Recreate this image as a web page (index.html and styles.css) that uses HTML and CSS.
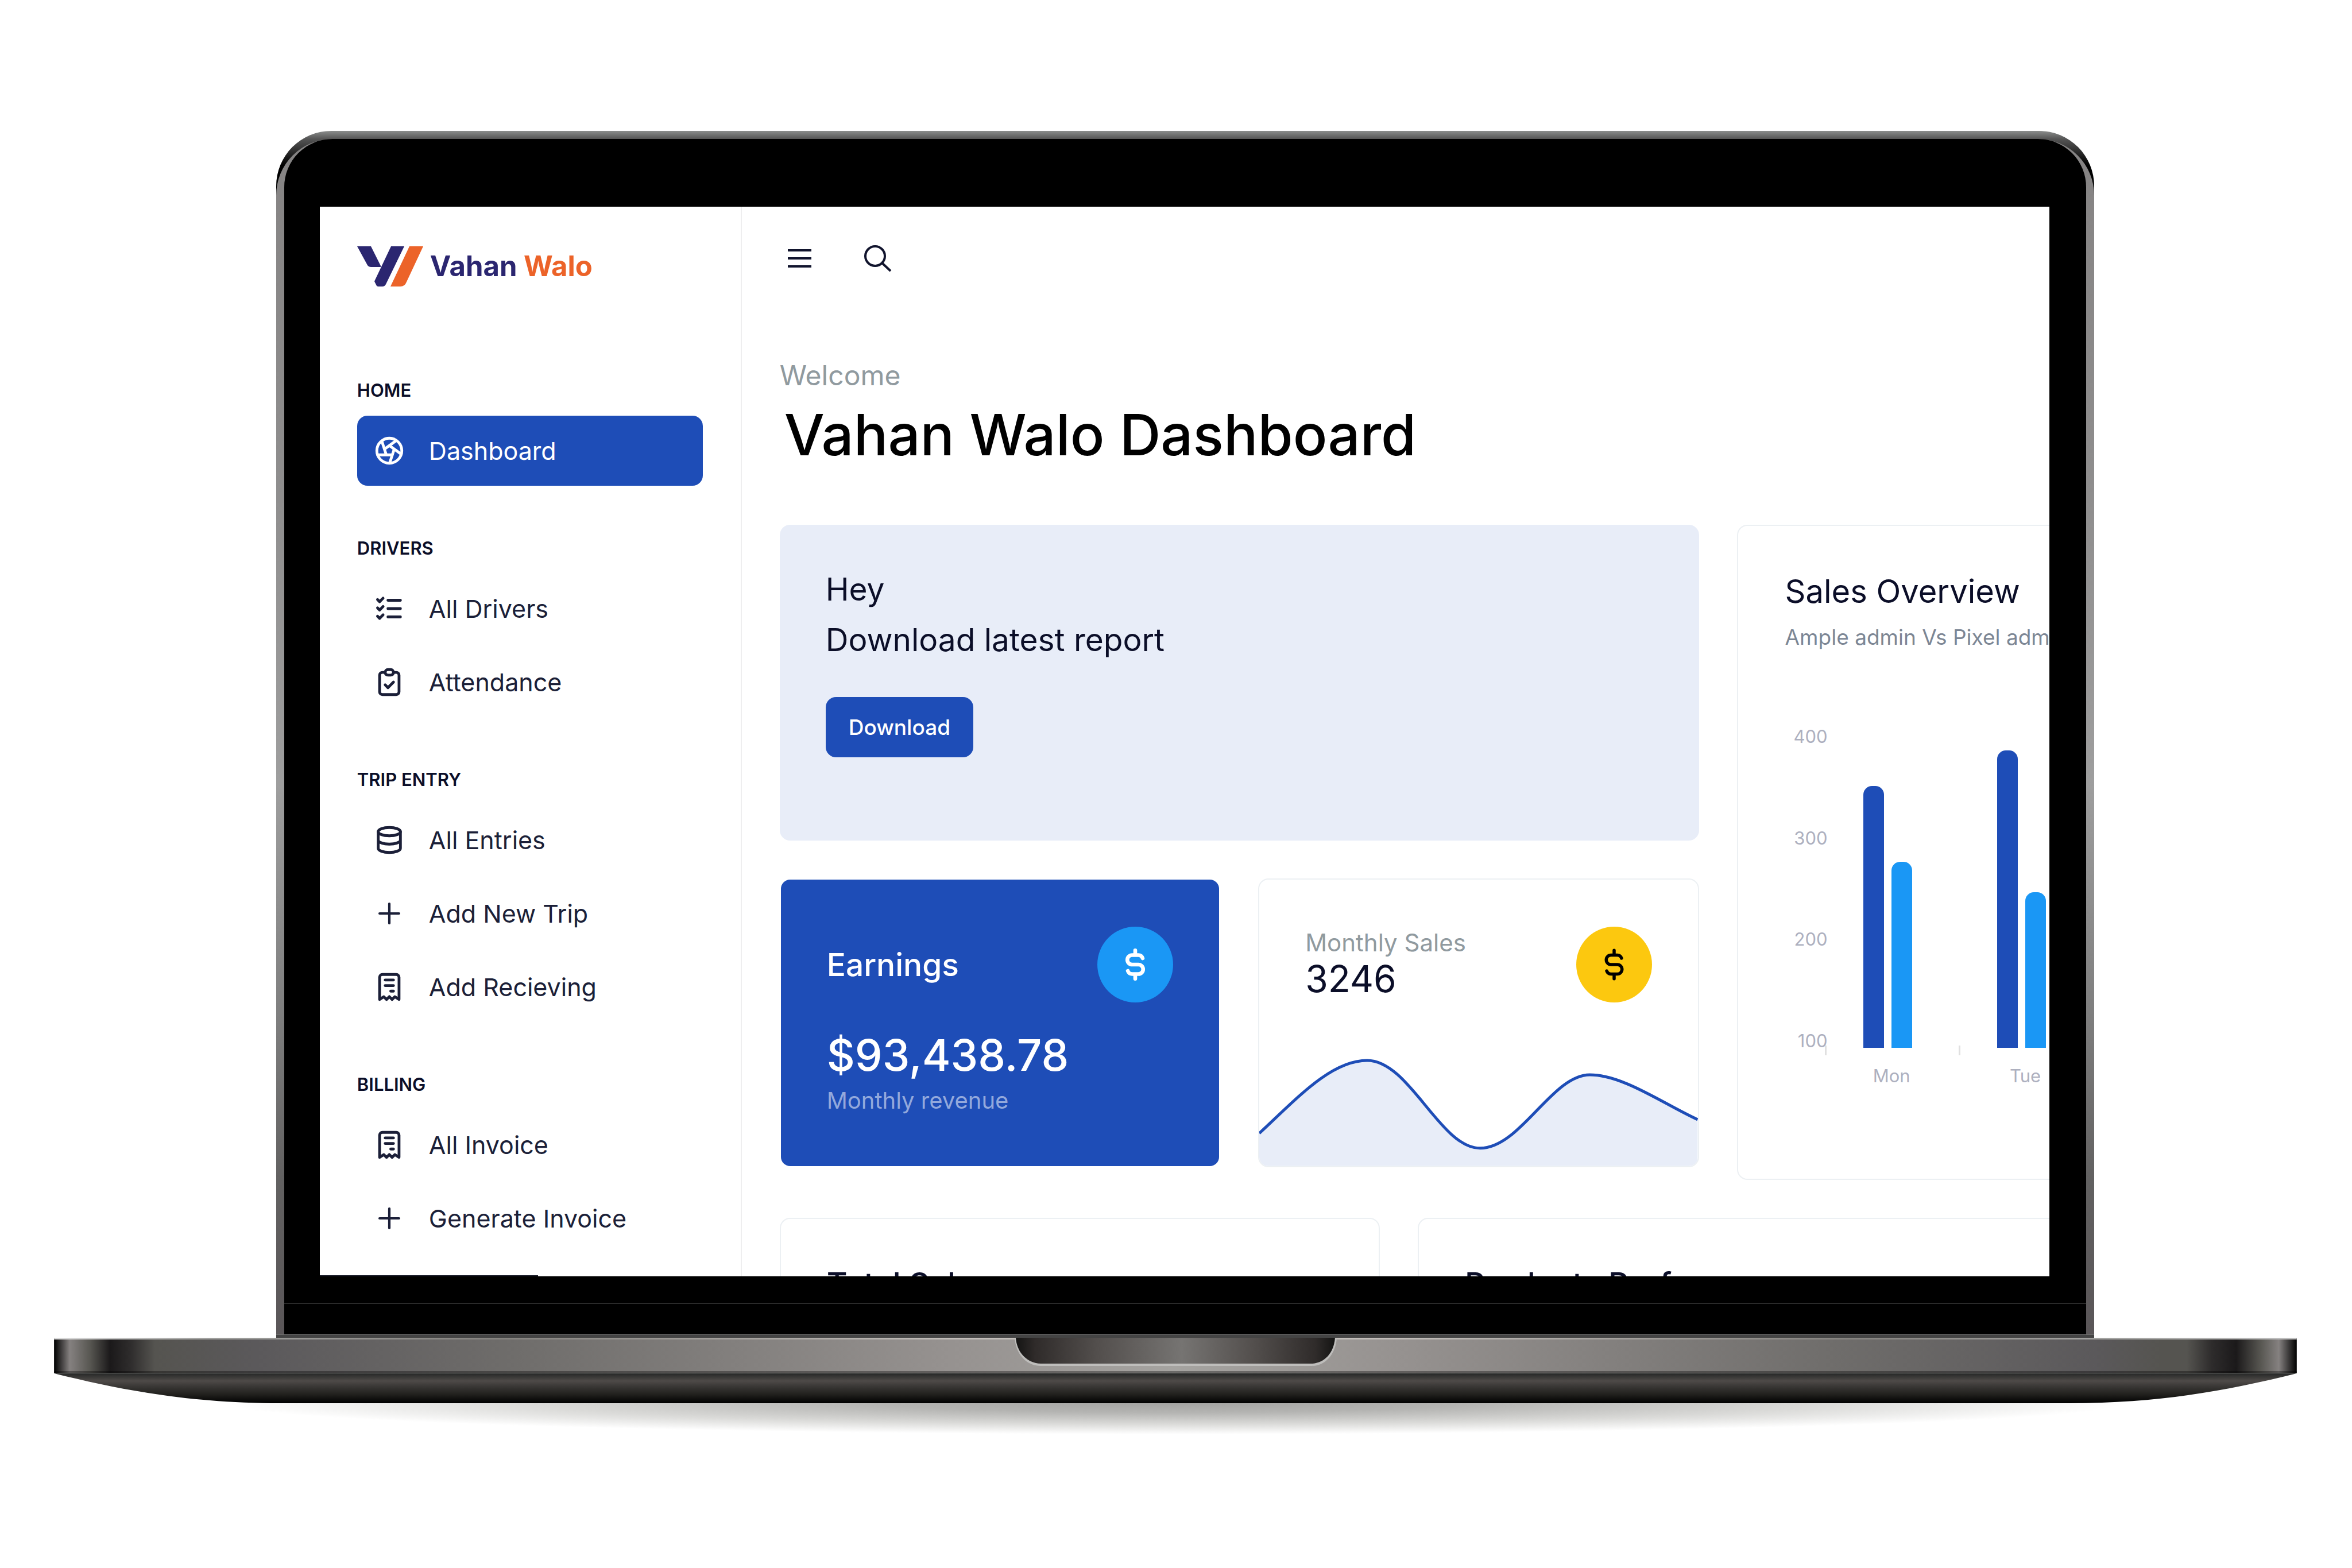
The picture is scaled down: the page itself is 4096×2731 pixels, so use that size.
FILE: index.html
```html
<!DOCTYPE html>
<html lang="en">
<head>
<meta charset="utf-8">
<meta name="viewport" content="width=device-width, initial-scale=1">
<title>Vahan Walo Dashboard</title>
<link rel="stylesheet" href="styles.css">
</head>
<body>
<svg class="sprite" aria-hidden="true">
  <symbol id="i-aperture" viewBox="0 0 24 24"><circle cx="12" cy="12" r="9"/><path d="M3.6 15h10.55M6.551 4.938l3.26 10.034M17.032 4.636l-8.535 6.201M20.559 14.51l-8.535-6.201M12.257 20.916l3.261-10.034"/></symbol>
  <symbol id="i-list" viewBox="0 0 24 24"><path d="M3.5 5.5l1.5 1.5l2.5-2.5M3.5 11.5l1.5 1.5l2.5-2.5M3.5 17.5l1.5 1.5l2.5-2.5M11 6h9M11 12h9M11 18h9"/></symbol>
  <symbol id="i-clipboard" viewBox="0 0 24 24"><path d="M9 5h-2a2 2 0 0 0-2 2v12a2 2 0 0 0 2 2h10a2 2 0 0 0 2-2v-12a2 2 0 0 0-2-2h-2"/><rect x="9" y="3" width="6" height="4" rx="2"/><path d="M9 14l2 2l4-4"/></symbol>
  <symbol id="i-database" viewBox="0 0 24 24"><ellipse cx="12" cy="6" rx="8" ry="3"/><path d="M4 6v6a8 3 0 0 0 16 0v-6M4 12v6a8 3 0 0 0 16 0v-6"/></symbol>
  <symbol id="i-plus" viewBox="0 0 24 24"><path stroke-width="1.75" d="M12 5v14M5 12h14"/></symbol>
  <symbol id="i-receipt" viewBox="0 0 24 24"><path d="M5 21v-16a2 2 0 0 1 2-2h10a2 2 0 0 1 2 2v16l-3-2l-2 2l-2-2l-2 2l-2-2l-3 2M9 7h6M9 11h6M13 15h2"/></symbol>
  <symbol id="i-dollar" viewBox="0 0 24 24"><path d="M16.7 8a3 3 0 0 0-2.7-2h-4a3 3 0 0 0 0 6h4a3 3 0 0 1 0 6h-4a3 3 0 0 1-2.7-2M12 3v3M12 18v3"/></symbol>
</svg>

<div class="laptop">
  <div class="lid">
    <div class="rim">
      <div class="bezel">
        <div class="screen">
          <aside class="sidebar">
            <a class="brand" href="#">
              <svg class="brand-mark" viewBox="0 0 115 70" aria-hidden="true">
                <path fill="#2b2670" d="M0 0H24L41 34V36H24Q20 36 18 33Z"/>
                <path fill="#2b2670" d="M59 0H82L50 66Q48 70 44 70H37Q34 70 33 67L30 61Z"/>
                <path fill="#ec6329" d="M91 0H115L86 62Q83 70 75 70H58Z"/>
              </svg>
              <span class="brand-name">Vahan <span class="brand-accent">Walo</span></span>
            </a>
            <nav class="menu">
              <section class="menu-group">
                <h2>HOME</h2>
                <a class="item active" href="#"><svg class="icon"><use href="#i-aperture"/></svg>Dashboard</a>
              </section>
              <section class="menu-group">
                <h2>DRIVERS</h2>
                <a class="item" href="#"><svg class="icon"><use href="#i-list"/></svg>All Drivers</a>
                <a class="item" href="#"><svg class="icon"><use href="#i-clipboard"/></svg>Attendance</a>
              </section>
              <section class="menu-group">
                <h2>TRIP ENTRY</h2>
                <a class="item" href="#"><svg class="icon"><use href="#i-database"/></svg>All Entries</a>
                <a class="item" href="#"><svg class="icon"><use href="#i-plus"/></svg>Add New Trip</a>
                <a class="item" href="#"><svg class="icon"><use href="#i-receipt"/></svg>Add Recieving</a>
              </section>
              <section class="menu-group">
                <h2>BILLING</h2>
                <a class="item" href="#"><svg class="icon"><use href="#i-receipt"/></svg>All Invoice</a>
                <a class="item" href="#"><svg class="icon"><use href="#i-plus"/></svg>Generate Invoice</a>
              </section>
            </nav>
          </aside>

          <main class="main">
            <div class="topbar">
              <button class="tool" type="button" aria-label="Toggle menu"><svg viewBox="0 0 60 60"><path d="M10 16H51M10 30H51M10 44H51"/></svg></button>
              <button class="tool" type="button" aria-label="Search"><svg viewBox="0 0 60 60"><circle cx="26" cy="26" r="17"/><path d="M38 38L53 52"/></svg></button>
            </div>
            <p class="welcome">Welcome</p>
            <h1>Vahan Walo Dashboard</h1>

            <div class="cards">
              <div class="left">
                <section class="hero">
                  <p>Hey<br>Download latest report</p>
                  <button class="download" type="button">Download</button>
                </section>
                <div class="pair">
                  <section class="card earnings">
                    <div class="card-row">
                      <h3>Earnings</h3>
                      <span class="coin coin-blue"><svg class="dollar"><use href="#i-dollar"/></svg></span>
                    </div>
                    <p class="amount">$93,438.78</p>
                    <p class="caption">Monthly revenue</p>
                  </section>
                  <section class="card monthly">
                    <div class="card-row">
                      <div>
                        <p class="label">Monthly Sales</p>
                        <p class="count">3246</p>
                      </div>
                      <span class="coin coin-yellow"><svg class="dollar"><use href="#i-dollar"/></svg></span>
                    </div>
                    <svg class="spark" viewBox="0 0 764 200" aria-hidden="true">
                      <path fill="#e8edf8" d="M0 143C66 82 125 16 188 16C262 16 315 169 385 169C455 169 510 41 576 41C634 41 705 92 764 119V200H0Z"/>
                      <path fill="none" stroke="#1e4db7" stroke-width="5" d="M0 143C66 82 125 16 188 16C262 16 315 169 385 169C455 169 510 41 576 41C634 41 705 92 764 119"/>
                    </svg>
                  </section>
                </div>
              </div>

              <section class="card sales">
                <h3>Sales Overview</h3>
                <p class="sub">Ample admin Vs Pixel admin</p>
                <div class="chart">
                  <div class="y-axis"><span>400</span><span>300</span><span>200</span><span>100</span></div>
                  <div class="plot">
                    <div class="day"><div class="bars"><i class="bar" style="height:456px"></i><i class="bar light" style="height:324px"></i></div><span>Mon</span></div>
                    <div class="day"><div class="bars"><i class="bar" style="height:518px"></i><i class="bar light" style="height:271px"></i></div><span>Tue</span></div>
                  </div>
                </div>
              </section>

              <section class="card total"><h3>Total Sales</h3></section>
              <section class="card products"><h3>Products Performance</h3></section>
            </div>
          </main>
          <div class="status"></div>
        </div>
        <div class="chin"></div>
      </div>
    </div>
    <div class="hinge"></div>
  </div>

  <svg class="base" viewBox="0 0 3906 180" aria-hidden="true">
    <defs>
      <linearGradient id="deck">
        <stop offset="0" stop-color="#000"/><stop offset=".007" stop-color="#858180"/><stop offset=".016" stop-color="#585752"/><stop offset=".025" stop-color="#1b191a"/><stop offset=".034" stop-color="#2e2c2c"/><stop offset=".045" stop-color="#555450"/><stop offset=".09" stop-color="#5b595b"/><stop offset=".206" stop-color="#6f6d6b"/><stop offset=".4" stop-color="#969290"/><stop offset=".5" stop-color="#a5a3a0"/>
        <stop offset=".6" stop-color="#969290"/><stop offset=".794" stop-color="#6f6d6b"/><stop offset=".91" stop-color="#5b595b"/><stop offset=".94" stop-color="#555450"/><stop offset=".951" stop-color="#555450"/><stop offset=".962" stop-color="#2e2c2c"/><stop offset=".973" stop-color="#1b191a"/><stop offset=".984" stop-color="#585752"/><stop offset=".992" stop-color="#858180"/><stop offset="1" stop-color="#000"/>
      </linearGradient>
      <linearGradient id="edge">
        <stop offset="0" stop-color="#dcdcdc"/><stop offset=".07" stop-color="#a0a09e"/><stop offset=".2" stop-color="#85837f"/><stop offset=".4" stop-color="#c2beba"/><stop offset=".6" stop-color="#c2beba"/><stop offset=".8" stop-color="#85837f"/><stop offset=".93" stop-color="#a8a8a6"/><stop offset="1" stop-color="#c0c0c0"/>
      </linearGradient>
      <linearGradient id="belly" x2="0" y2="1">
        <stop offset="0" stop-color="#262827"/><stop offset=".25" stop-color="#4e4a48"/><stop offset=".45" stop-color="#383634"/><stop offset=".7" stop-color="#22211e"/><stop offset="1" stop-color="#000"/>
      </linearGradient>
      <linearGradient id="notch">
        <stop offset="0" stop-color="#141413"/><stop offset=".06" stop-color="#2f2b2a"/><stop offset=".25" stop-color="#524e4c"/><stop offset=".52" stop-color="#767472"/><stop offset=".75" stop-color="#524e4c"/><stop offset=".94" stop-color="#2f2b2a"/><stop offset="1" stop-color="#141413"/>
      </linearGradient>
      <radialGradient id="shade">
        <stop offset="0" stop-color="#a4a4a2"/><stop offset=".3" stop-color="#b4b4b2"/><stop offset=".67" stop-color="#dadad8"/><stop offset="1" stop-color="#fff"/>
      </radialGradient>
    </defs>
    <ellipse cx="1953" cy="114" rx="1651" ry="54" fill="url(#shade)"/>
    <path fill="url(#belly)" d="M0 62C120 92 240 114 395 114H3511C3666 114 3786 92 3906 62Z"/>
    <rect width="3906" height="62" fill="url(#deck)"/>
    <rect width="3906" height="3" fill="url(#edge)"/>
    <rect y="58" width="3906" height="4" fill="#000" opacity=".35"/>
    <rect y="61" width="3906" height="1" fill="#8a8a88"/>
    <path fill="#bebdbb" d="M1673 0C1675 30 1695 49 1717 49H2191C2213 49 2232 30 2234 0Z"/>
    <path fill="url(#notch)" d="M1675 0C1677 28 1697 45 1719 45H2189C2211 45 2229 28 2231 0Z"/>
  </svg>
</div>
</body>
</html>
```
FILE: styles.css
```css
* { box-sizing: border-box; }
body, h1, h2, h3, p { margin: 0; }
body {
  background: #fff;
  color: #0b0e28;
  font-family: Inter, "Liberation Sans", sans-serif;
  overflow: hidden;
}
h1, h2, h3 { font-weight: 500; }
a { color: inherit; text-decoration: none; }
button { font: inherit; border: 0; cursor: pointer; }
.sprite { display: none; }

/* Laptop shell */
.laptop { padding-top: 228px; }
.lid {
  width: 77.29%;
  margin-left: 11.74%;
  padding-top: 14px;
  border-radius: 96px 96px 0 0;
  background: linear-gradient(#8b8d8c, #555 14px, #000 60px);
}
.rim {
  padding: 0 14px;
  border-radius: 98px 98px 0 0;
  background: linear-gradient(#858383, #8f8e8e 30%, #9e9e9e 54%, #7f7f7f 73%, #626161 87%, #5a5658);
}
.bezel {
  padding: 118px 64px 0 62px;
  border-radius: 84px 84px 0 0;
  background: #000;
}
.chin {
  height: 101px;
  margin: 0 -64px 0 -62px;
  background: linear-gradient(#333, #333) 0 47px / 100% 1px no-repeat;
}
.hinge { height: 6px; background: #444; border-top: 1px solid #6c6c6c; }
.base { display: block; width: 95.36%; margin-left: 2.3%; }

.screen {
  position: relative;
  display: grid;
  grid-template-columns: 24.4% minmax(0, 1fr);
  aspect-ratio: 3012 / 1863;
  overflow: hidden;
  background: #fff;
}
.status {
  position: absolute;
  left: 0;
  bottom: 0;
  width: 380px;
  height: 2px;
  background: #1c1f2b;
}

/* Sidebar */
.sidebar {
  min-height: 0;
  padding: 68px 66px 0 65px;
  border-right: 2px solid #eeeeef;
}
.brand { display: flex; align-items: center; gap: 12px; }
.brand-mark { flex: none; width: 115px; height: 70px; }
.brand-name { font-size: 49px; line-height: 72px; font-weight: 700; color: #2b2670; }
.brand-accent { color: #ec6329; }
.menu { display: grid; gap: 89px; margin-top: 160px; }
.menu-group { display: grid; gap: 6px; }
.menu-group h2 {
  margin-bottom: 18px;
  font-size: 31px;
  line-height: 40px;
  font-weight: 600;
}
.item {
  display: flex;
  align-items: center;
  gap: 40px;
  height: 122px;
  padding: 0 27px;
  border-radius: 18px;
  font-size: 43px;
  line-height: 52px;
  color: #1b1f38;
}
.item.active { background: #1e4db7; color: #fff; }
.icon, .dollar, .tool svg {
  fill: none;
  stroke: currentColor;
  stroke-width: 2;
  stroke-linecap: round;
  stroke-linejoin: round;
}
.icon { width: 58px; height: 58px; }

/* Main column */
.main { min-height: 0; padding: 60px 0 0 66px; }
.topbar { display: flex; gap: 76px; padding-left: 4px; }
.tool { width: 60px; height: 60px; padding: 0; background: none; color: #11142d; }
.tool svg { display: block; stroke-width: 4; stroke-linecap: butt; }
.welcome { margin-top: 144px; font-size: 48px; line-height: 60px; color: #909a9f; }
h1 { margin-top: 13px; padding-left: 8px; font-size: 99px; line-height: 120px; color: #000; }

.cards {
  display: grid;
  grid-template-columns: repeat(12, minmax(0, 1fr));
  gap: 66px;
  width: 147.8%;
  margin-top: 97px;
}
.left { grid-column: span 6; }
.sales { grid-column: span 6; }
.total { grid-column: span 4; }
.products { grid-column: span 8; }

.hero {
  padding: 68px 80px 145px;
  border-radius: 18px;
  background: #e8edf8;
}
.hero p { font-size: 55px; line-height: 88px; }
.download {
  display: block;
  margin-top: 56px;
  padding: 30px 40px;
  border-radius: 18px;
  background: #1e4db7;
  color: #fff;
  font-size: 37px;
  line-height: 45px;
  font-weight: 500;
}

.pair { display: grid; grid-template-columns: 1fr 1fr; gap: 66px; margin-top: 66px; }
.card { border: 2px solid #ecf0f3; border-radius: 18px; padding: 80px; }
.card h3 { font-size: 55px; line-height: 66px; }
.card-row { display: flex; align-items: center; justify-content: space-between; }
.earnings {
  padding-top: 82px;
  border-color: transparent;
  background: #1e4db7 padding-box;
  color: #fff;
}
.coin { display: grid; place-items: center; width: 132px; height: 132px; border-radius: 50%; }
.coin-blue { background: #1a97f5; }
.coin-blue .dollar { stroke-width: 2.4; }
.coin-yellow { background: #fcc80f; color: #000; }
.dollar { width: 66px; height: 66px; }
.amount { margin-top: 45px; font-size: 76px; line-height: 92px; font-weight: 500; }
.caption { margin-top: 10px; font-size: 40px; line-height: 48px; color: #93a9dc; }
.monthly { padding: 82px 0 0; overflow: hidden; }
.monthly .card-row { padding: 0 80px; }
.label { font-size: 42px; line-height: 50px; color: #909a9f; }
.count { font-size: 64px; line-height: 76px; }
.spark { display: block; width: 100%; margin-top: 85px; }

.sales { padding: 81px 82px 161px; }
.sales h3 { font-size: 56px; font-weight: 400; }
.sub { margin-top: 24px; font-size: 37px; line-height: 46px; color: #7c8694; white-space: nowrap; }
.chart {
  display: flex;
  align-items: flex-start;
  margin-top: 132px;
  font-size: 31px;
  line-height: 36px;
  color: #adb0bf;
}
.y-axis {
  display: flex;
  flex-direction: column;
  justify-content: space-between;
  width: 74px;
  height: 566px;
  text-align: right;
}
.plot { display: flex; margin-left: -5px; }
.day { width: 233px; text-align: center; }
.day span { display: block; margin-top: 31px; }
.bars {
  position: relative;
  display: flex;
  align-items: flex-end;
  justify-content: center;
  gap: 13px;
  height: 560px;
  padding-right: 13px;
}
/* Category tick that straddles the baseline */
.bars::before {
  content: "";
  position: absolute;
  left: 0;
  bottom: -13px;
  width: 3px;
  height: 17px;
  background: #e0e0e0;
}
.bar { width: 36px; border-radius: 15px 15px 0 0; background: #1e4db7; }
.bar.light { background: #1a97f5; }
```
